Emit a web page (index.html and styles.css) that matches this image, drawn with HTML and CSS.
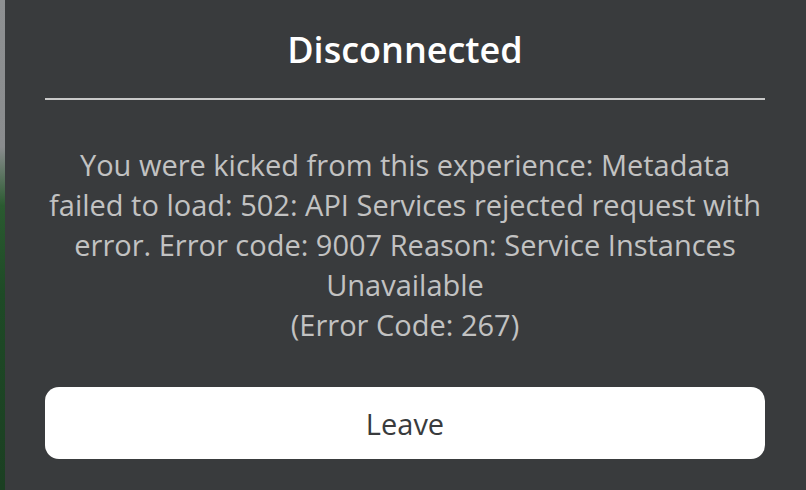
FILE: index.html
```html
<!DOCTYPE html>
<html>
<head>
<meta charset="utf-8">
<link rel="stylesheet" href="styles.css">
</head>
<body>
<div class="strip"></div>
<div class="panel">
  <h1 class="title">Disconnected</h1>
  <div class="divider"></div>
  <p class="message">You were kicked from this experience: Metadata<br>failed to load: 502: API Services rejected request with<br>error. Error code: 9007 Reason: Service Instances<br>Unavailable<br>(Error Code: 267)</p>
  <button class="leave">Leave</button>
</div>
</body>
</html>
```
FILE: styles.css
```css
html, body {
  margin: 0;
  padding: 0;
  width: 806px;
  height: 490px;
  overflow: hidden;
}
body {
  display: flex;
  background: #393b3d;
  font-family: "Open Sans", sans-serif;
}
.strip {
  width: 5px;
  flex: none;
  background: linear-gradient(to bottom, #8e9092 0%, #8a8c8e 30%, #2a5a30 42%, #1e4a26 60%, #1b3f22 100%);
}
.panel {
  flex: 1;
  display: flex;
  flex-direction: column;
  align-items: center;
  padding: 0 41px 0 40px;
  background: #393b3d;
}
.title {
  margin: 27px 0 0;
  font-size: 36px;
  line-height: 46px;
  font-weight: 600;
  color: #ffffff;
}
.divider {
  align-self: stretch;
  height: 2px;
  margin-top: 25px;
  background: #c9c9c9;
}
.message {
  margin: 45px -10px 0;
  font-size: 29px;
  line-height: 40px;
  color: #c2c2c2;
  text-align: center;
  white-space: nowrap;
}
.leave {
  align-self: stretch;
  margin-top: 42px;
  height: 72px;
  border: none;
  border-radius: 14px;
  background: #ffffff;
  color: #393b3d;
  font-family: "Open Sans", sans-serif;
  font-size: 29px;
}
```
